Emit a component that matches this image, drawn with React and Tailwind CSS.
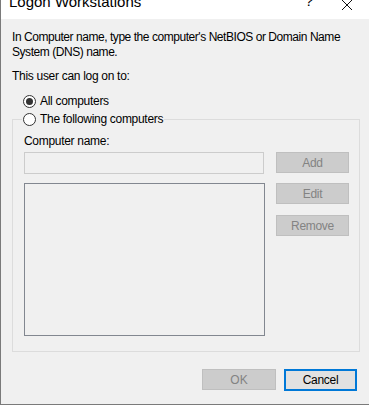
import React from 'react';

const font = { fontFamily: '"Liberation Sans", Arial, sans-serif' };

const Radio = ({ checked, label }) => (
    <div className="flex items-center gap-[4px] h-[16px]">
        <span className="w-[13px] h-[13px] rounded-full border border-[#333] bg-white flex items-center justify-center">
            {checked && <span className="w-[7px] h-[7px] rounded-full bg-[#333]" />}
        </span>
        <span className="text-[12px] tracking-[-0.3px] text-black whitespace-nowrap">{label}</span>
    </div>
);

const SideButton = ({ children }) => (
    <div className="w-[73px] h-[21px] bg-[#cccccc] border border-[#bfbfbf] flex items-center justify-center text-[12px] tracking-[-0.3px] text-[#838383]">
        {children}
    </div>
);

export default function App() {
    return (
        <div style={font} className="w-[369px] h-[405px] bg-[#f0f0f0] border-l border-b border-[#7a7a7a] flex flex-col overflow-hidden">
            {/* title bar */}
            <div className="h-[19px] bg-white flex items-start overflow-hidden">
                <span className="ml-[8px] -mt-[8px] text-[15px] text-black leading-[20px] whitespace-nowrap">Logon Workstations</span>
                <span className="ml-auto mr-[28px] -mt-[9px] text-[15px] text-black leading-[20px]">?</span>
                <svg width="12" height="12" viewBox="0 0 12 12" className="mr-[16px] -mt-[1px]">
                    <path d="M1 1 L11 11 M11 1 L1 11" stroke="#111" strokeWidth="1" />
                </svg>
            </div>

            <div className="px-[11px] pt-[11px] flex flex-col">
                <p className="text-[12px] leading-[15px] tracking-[-0.45px] text-black whitespace-nowrap">
                    In Computer name, type the computer's NetBIOS or Domain Name<br />System (DNS) name.
                </p>
                <p className="text-[12px] leading-[15px] tracking-[-0.3px] text-black mt-[9px]">This user can log on to:</p>
                <div className="ml-[11px] mt-[9px]">
                    <Radio checked label="All computers" />
                </div>

                {/* group box */}
                <div className="relative mt-[10px] w-[348px] h-[233px] border border-[#dcdcdc]">
                    <div className="absolute -top-[9px] left-[9px] px-[1px] bg-[#f0f0f0]">
                        <Radio label="The following computers" />
                    </div>
                    <div className="pl-[11px] pt-[14px] flex flex-col">
                        <p className="text-[12px] leading-[15px] tracking-[-0.3px] text-black">Computer name:</p>
                        <div className="flex gap-[11px] mt-[3px]">
                            <div className="flex flex-col gap-[9px]">
                                <div className="w-[240px] h-[22px] border border-[#cccccc] bg-[#f0f0f0]" />
                                <div className="w-[241px] h-[153px] border border-[#828790] bg-[#f0f0f0]" />
                            </div>
                            <div className="flex flex-col gap-[10px]">
                                <SideButton>Add</SideButton>
                                <SideButton>Edit</SideButton>
                                <div className="mt-[1px]">
                                    <SideButton>Remove</SideButton>
                                </div>
                            </div>
                        </div>
                    </div>
                </div>

                <div className="flex justify-end gap-[8px] mt-[17px] mr-[1px]">
                    <div className="w-[74px] h-[21px] bg-[#cccccc] border border-[#bfbfbf] flex items-center justify-center text-[12px] text-[#838383]">OK</div>
                    <div className="w-[73px] h-[22px] bg-[#e1e1e1] border-2 border-[#0078d7] flex items-center justify-center text-[12px] tracking-[-0.3px] text-black">Cancel</div>
                </div>
            </div>
        </div>
    );
}
